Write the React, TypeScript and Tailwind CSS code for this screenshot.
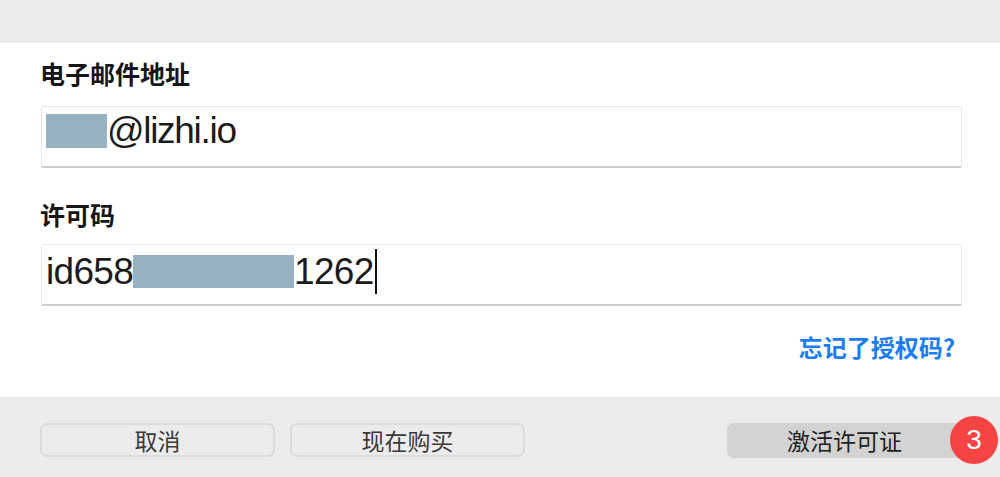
import React from "react";

const cjk = { fontFamily: '"Noto Sans CJK SC", "Noto Sans", sans-serif' };
const latin = { fontFamily: '"Liberation Sans", Arial, "Noto Sans CJK SC", sans-serif' };

export default function App() {
  return (
    <div className="w-[1000px] h-[477px] overflow-hidden flex flex-col bg-white" style={cjk}>
      <div className="h-[43px] bg-[#ebebeb]" />
      <div className="h-[354px] bg-white flex flex-col">
        <div className="mt-[15px] pl-[40px] h-[31px] leading-[31px] text-[25px] font-bold text-[#161616]">
          电子邮件地址
        </div>
        <div className="mt-[17px] ml-[41px] w-[921px] h-[62px] border border-[#e8e8e8] border-b-2 border-b-[#cdcdcd] rounded-[2px] bg-white pl-[4px]">
          <div className="mt-[5px] h-[37px] flex items-center">
            <span className="w-[61px] h-[34px] bg-[#97b3c1]" />
            <span className="text-[37px] leading-none tracking-[-1.3px] text-[#1c1c1c]" style={latin}>
              @lizhi.io
            </span>
          </div>
        </div>
        <div className="mt-[31px] pl-[40px] h-[31px] leading-[31px] text-[25px] font-bold text-[#161616]">
          许可码
        </div>
        <div className="mt-[14px] ml-[41px] w-[921px] h-[62px] border border-[#e8e8e8] border-b-2 border-b-[#cdcdcd] rounded-[2px] bg-white pl-[4px]">
          <div className="mt-[8px] h-[37px] flex items-center">
            <span className="text-[37px] leading-none tracking-[-0.7px] text-[#1c1c1c]" style={latin}>
              id658
            </span>
            <span className="w-[161px] h-[33px] bg-[#97b3c1]" />
            <span className="text-[37px] leading-none tracking-[-0.7px] text-[#1c1c1c]" style={latin}>
              1262
            </span>
            <span className="ml-[1px] w-[2px] h-[45px] bg-[#111]" />
          </div>
        </div>
        <div className="mt-[25px] w-[955px] flex justify-end">
          <a className="h-[31px] leading-[31px] text-[24px] font-semibold text-[#1c7df2]">忘记了授权码?</a>
        </div>
      </div>
      <div className="h-[80px] bg-[#ececec] flex items-start pt-[26px] pl-[40px]">
        <button className="w-[235px] h-[34px] rounded-[7px] border-2 border-[#dcdcdc] text-[23px] leading-none text-[#3a3a3a] flex items-center justify-center">
          取消
        </button>
        <button className="ml-[15px] w-[235px] h-[34px] rounded-[7px] border-2 border-[#dcdcdc] text-[23px] leading-none text-[#3a3a3a] flex items-center justify-center">
          现在购买
        </button>
        <div className="ml-[202px] relative">
          <button className="w-[235px] h-[35px] rounded-[7px] bg-[#d3d3d3] text-[23px] leading-none text-[#222] flex items-center justify-center">
            激活许可证
          </button>
          <div
            className="absolute left-[223px] top-[-7px] w-[48px] h-[48px] rounded-full bg-[#f64343] flex items-center justify-center text-white text-[28px] leading-none"
            style={latin}
          >
            3
          </div>
        </div>
      </div>
    </div>
  );
}
